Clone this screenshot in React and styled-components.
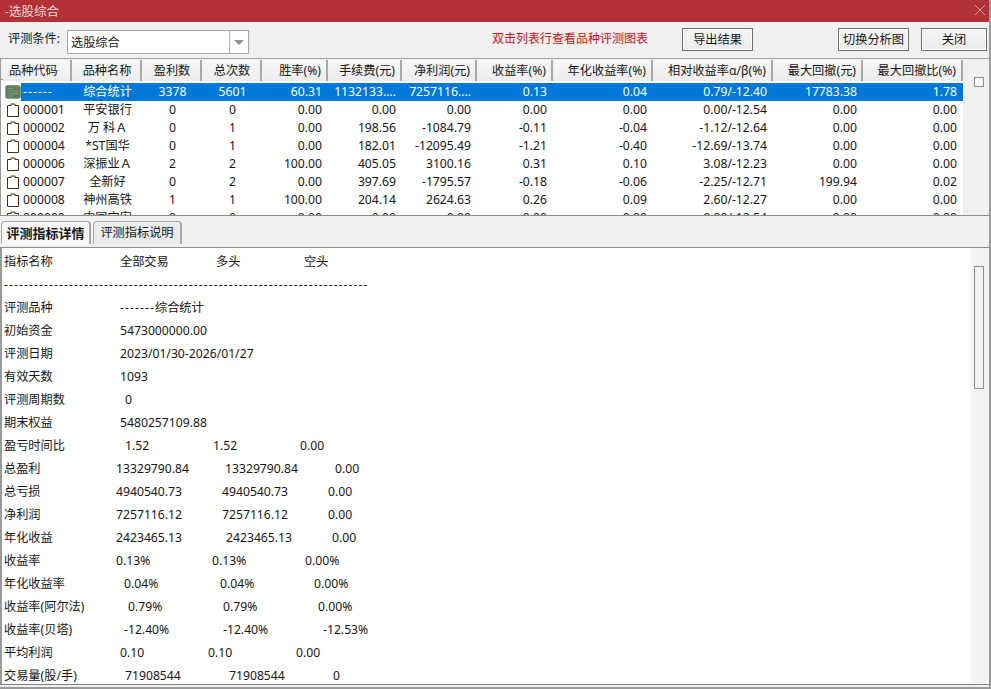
import styled, { createGlobalStyle } from "styled-components";

const GlobalStyle = createGlobalStyle`
  html, body {
    margin: 0;
    padding: 0;
    background: #f0f0f0;
  }
  body {
    font-family: "Noto Sans", "Noto Sans CJK SC", sans-serif;
    font-size: 12.2px;
    color: #161616;
  }
`;

const COLUMNS = "69px 70px 60px 60px 66px 74px 75px 76px 100px 120px 90px 100px";

const headers = [
  "品种代码",
  "品种名称",
  "盈利数",
  "总次数",
  "胜率(%)",
  "手续费(元)",
  "净利润(元)",
  "收益率(%)",
  "年化收益率(%)",
  "相对收益率α/β(%)",
  "最大回撤(元)",
  "最大回撤比(%)",
];

const rows = [
  ["------", "综合统计", "3378", "5601", "60.31", "1132133....", "7257116....", "0.13", "0.04", "0.79/-12.40", "17783.38", "1.78"],
  ["000001", "平安银行", "0", "0", "0.00", "0.00", "0.00", "0.00", "0.00", "0.00/-12.54", "0.00", "0.00"],
  ["000002", "万 科Ａ", "0", "1", "0.00", "198.56", "-1084.79", "-0.11", "-0.04", "-1.12/-12.64", "0.00", "0.00"],
  ["000004", "*ST国华", "0", "1", "0.00", "182.01", "-12095.49", "-1.21", "-0.40", "-12.69/-13.74", "0.00", "0.00"],
  ["000006", "深振业Ａ", "2", "2", "100.00", "405.05", "3100.16", "0.31", "0.10", "3.08/-12.23", "0.00", "0.00"],
  ["000007", "全新好", "0", "2", "0.00", "397.69", "-1795.57", "-0.18", "-0.06", "-2.25/-12.71", "199.94", "0.02"],
  ["000008", "神州高铁", "1", "1", "100.00", "204.14", "2624.63", "0.26", "0.09", "2.60/-12.27", "0.00", "0.00"],
  ["000009", "中国宝安", "0", "0", "0.00", "0.00", "0.00", "0.00", "0.00", "0.00/-12.54", "0.00", "0.00"],
];

// each line: label, then [x, text] pairs, x measured from the window's left edge
const details = [
  ["指标名称", [120, "全部交易"], [216, "多头"], [304, "空头"]],
  ["-".repeat(73)],
  ["评测品种", [120, "-------", "综合统计"]],
  ["初始资金", [120, "5473000000.00"]],
  ["评测日期", [120, "2023/01/30-2026/01/27"]],
  ["有效天数", [120, "1093"]],
  ["评测周期数", [125, "0"]],
  ["期末权益", [120, "5480257109.88"]],
  ["盈亏时间比", [125, "1.52"], [213, "1.52"], [300, "0.00"]],
  ["总盈利", [116, "13329790.84"], [225, "13329790.84"], [335, "0.00"]],
  ["总亏损", [116, "4940540.73"], [222, "4940540.73"], [328, "0.00"]],
  ["净利润", [116, "7257116.12"], [222, "7257116.12"], [328, "0.00"]],
  ["年化收益", [116, "2423465.13"], [226, "2423465.13"], [332, "0.00"]],
  ["收益率", [116, "0.13%"], [212, "0.13%"], [305, "0.00%"]],
  ["年化收益率", [124, "0.04%"], [220, "0.04%"], [314, "0.00%"]],
  ["收益率(阿尔法)", [128, "0.79%"], [223, "0.79%"], [318, "0.00%"]],
  ["收益率(贝塔)", [124, "-12.40%"], [223, "-12.40%"], [323, "-12.53%"]],
  ["平均利润", [120, "0.10"], [208, "0.10"], [296, "0.00"]],
  ["交易量(股/手)", [125, "71908544"], [229, "71908544"], [333, "0"]],
];

function NoteIcon({ selected }) {
  if (selected) {
    return (
      <svg width="16" height="14" viewBox="0 0 16 14">
        <rect x="0.500" y="0.500" width="15" height="13" rx="2" fill="#5f7f5f" stroke="#8f9c90" />
        <path d="M3 3.500h5M3 6h10M3 8.500h10M3 11h6" stroke="#7f9c78" strokeWidth="1" />
      </svg>
    );
  }
  return (
    <svg width="12" height="14" viewBox="0 0 12 14">
      <path d="M0.500 2.500h3.500v-1.500h4v1.500h3.500v11h-11z" fill="#fff" stroke="#4a2a10" strokeWidth="1" />
    </svg>
  );
}

function App() {
  return (
    <>
      <GlobalStyle />
      <Window>
        <TitleBar>
          <span>-选股综合</span>
          <svg width="12" height="12" viewBox="0 0 12 12">
            <path d="M1 1l10 10M11 1L1 11" stroke="#d99ea1" strokeWidth="1" />
          </svg>
        </TitleBar>

        <Toolbar>
          <Label>评测条件:</Label>
          <Combo>
            <ComboText>选股综合</ComboText>
            <ComboArrow>
              <svg width="10" height="5" viewBox="0 0 10 5">
                <path d="M0 0h10L5 5z" fill="#8f8f8f" />
              </svg>
            </ComboArrow>
          </Combo>
          <Hint>双击列表行查看品种评测图表</Hint>
          <Button $w={71} $ml={33}>导出结果</Button>
          <Button $w={71} $ml={85}>切换分析图</Button>
          <Button $w={66} $ml={12}>关闭</Button>
        </Toolbar>

        <ListPanel>
          <ListMain>
            <HeaderRow>
              {headers.map((h, i) => (
                <HeaderCell key={h} $align={i === 0 ? "left" : i < 4 ? "center" : "right"}>
                  {h}
                </HeaderCell>
              ))}
            </HeaderRow>
            <ListBody>
              {rows.map((row, r) => (
                <Row key={row[0]}>
                  <IconSlot $selected={r === 0}>
                    <NoteIcon selected={r === 0} />
                  </IconSlot>
                  <Cells $selected={r === 0}>
                    {row.map((v, i) => (
                      <Cell key={i} $align={i === 0 ? "left" : i < 4 ? "center" : "right"} $dashed={v === "------"}>
                        {v}
                      </Cell>
                    ))}
                  </Cells>
                </Row>
              ))}
            </ListBody>
          </ListMain>
          <SideTrack>
            <SideBox />
          </SideTrack>
        </ListPanel>

        <TabStrip>
          <Tab $active>评测指标详情</Tab>
          <Tab>评测指标说明</Tab>
        </TabStrip>

        <DetailPanel>
          <DetailText>
            {details.map(([label, ...fields]) => (
              <DetailLine key={label}>
                {fields.length === 0 ? (
                  <Dashes>{label}</Dashes>
                ) : (
                  <Field $w={fields[0][0] - 4}>{label}</Field>
                )}
                {fields.map(([x, text, tail], i) => (
                  <Field key={x} $w={fields[i + 1] ? fields[i + 1][0] - x : 160}>
                    {tail ? (
                      <>
                        <Dashes>{text}</Dashes>
                        {tail}
                      </>
                    ) : (
                      text
                    )}
                  </Field>
                ))}
              </DetailLine>
            ))}
          </DetailText>
          <Scrollbar>
            <Thumb />
          </Scrollbar>
        </DetailPanel>
      </Window>
    </>
  );
}

export default App;

const Window = styled.div`
  display: flex;
  flex-direction: column;
  width: 991px;
  height: 689px;
  overflow: hidden;
  box-sizing: border-box;
  background: #f0f0f0;
  border-right: 2px solid #9a9a9a;
  border-bottom: 2px solid #9a9a9a;
`;

const TitleBar = styled.div`
  display: flex;
  align-items: center;
  justify-content: space-between;
  flex: 0 0 22px;
  margin-right: -2px;
  padding: 0 5px 2px 5px;
  box-sizing: border-box;
  background: #b23137;
  color: #f4dcdc;
  font-size: 12.5px;
`;

const Toolbar = styled.div`
  display: flex;
  align-items: flex-start;
  flex: 0 0 36px;
  box-sizing: border-box;
  padding: 6px 0 0 8px;
`;

const Label = styled.span`
  width: 59px;
  line-height: 22px;
`;

const Combo = styled.div`
  display: flex;
  width: 182px;
  height: 24px;
  margin-top: 2px;
  box-sizing: border-box;
  background: #fff;
  border: 1px solid #a6a6a6;
`;

const ComboText = styled.span`
  flex: 1;
  padding-left: 3px;
  line-height: 23px;
`;

const ComboArrow = styled.span`
  display: flex;
  align-items: center;
  justify-content: center;
  width: 18px;
  border-left: 1px solid #b5b5b5;
`;

const Hint = styled.span`
  margin-left: 243px;
  width: 157px;
  line-height: 22px;
  font-size: 12px;
  color: #cc1111;
  white-space: nowrap;
`;

const Button = styled.div`
  width: ${(p) => p.$w}px;
  margin-left: ${(p) => p.$ml}px;
  height: 23px;
  box-sizing: border-box;
  border: 1px solid #6e6e6e;
  background: linear-gradient(#f5f5f5, #ececec);
  box-shadow: inset 0 0 0 1px #fbfbfb;
  text-align: center;
  line-height: 21px;
  white-space: nowrap;
`;

const ListPanel = styled.div`
  display: flex;
  flex: 0 0 158px;
  box-sizing: border-box;
  border-top: 1px solid #a3a3a3;
  border-bottom: 1px solid #8c8c8c;
  border-left: 1px solid #9a9a9a;
  background: #fff;
  overflow: hidden;
`;

const ListMain = styled.div`
  width: 962px;
  box-sizing: border-box;
  overflow: hidden;
`;

const HeaderRow = styled.div`
  display: grid;
  grid-template-columns: ${COLUMNS};
  height: 21px;
  padding: 1px 0 0 2px;
  box-sizing: border-box;
  background: #f0f0f0;
  border-bottom: 1px solid #9f9f9f;
`;

const HeaderCell = styled.div`
  padding-left: ${(p) => (p.$align === "left" ? "6px" : p.$align === "center" ? "2px" : "0")};
  padding-right: ${(p) => (p.$align === "right" ? "5px" : "0")};
  text-align: ${(p) => p.$align};
  line-height: 21px;
  white-space: nowrap;
  border-right: 2px solid #a8a8a8;
  box-sizing: border-box;
  background: linear-gradient(#f7f7f7, #ededed);
`;

const ListBody = styled.div`
  padding-top: 3px;
`;

const Row = styled.div`
  display: flex;
  height: 18px;
`;

const IconSlot = styled.div`
  display: flex;
  align-items: center;
  justify-content: flex-end;
  width: 20px;
  padding-right: ${(p) => (p.$selected ? "0" : "2px")};
  box-sizing: border-box;
`;

const Cells = styled.div`
  display: grid;
  grid-template-columns: 51px 70px 60px 60px 66px 74px 75px 76px 100px 120px 90px 100px;
  flex: 1;
  background: ${(p) => (p.$selected ? "#0078d7" : "transparent")};
  color: ${(p) => (p.$selected ? "#fff" : "inherit")};
`;

const Cell = styled.div`
  text-align: ${(p) => p.$align};
  padding-left: ${(p) => (p.$align === "left" ? "2px" : p.$align === "center" ? "1px" : "0")};
  padding-right: ${(p) => (p.$align === "right" ? "6px" : "0")};
  letter-spacing: ${(p) => (p.$dashed ? "1.07px" : "normal")};
  line-height: 17px;
  white-space: nowrap;
  overflow: hidden;
`;

const SideTrack = styled.div`
  flex: 1;
  background: #f0f0f0;
  padding: 18px 0 0 11px;
`;

const SideBox = styled.div`
  width: 10px;
  height: 10px;
  box-sizing: border-box;
  border: 1px solid #8e8e8e;
  background: #f7f7f7;
`;

const TabStrip = styled.div`
  display: flex;
  align-items: flex-end;
  flex: 0 0 32px;
  box-sizing: border-box;
  padding: 0 0 3px 1px;
  gap: 2px;
  border-bottom: 1px solid #8c8c8c;
`;

const Tab = styled.div`
  width: ${(p) => (p.$active ? "90px" : "89px")};
  height: 23px;
  box-sizing: border-box;
  text-align: center;
  line-height: 22px;
  font-weight: ${(p) => (p.$active ? 700 : 400)};
  font-size: ${(p) => (p.$active ? "13px" : "12.2px")};
  background: ${(p) => (p.$active ? "#f8f8f8" : "#ebebeb")};
  border: 1px solid #a8a8a8;
  border-right-width: 2px;
  border-bottom: 0;
  border-radius: 4px 4px 0 0;
  white-space: nowrap;
`;

const DetailPanel = styled.div`
  display: flex;
  flex: 1;
  min-height: 0;
  background: #fff;
  border-left: 2px solid #9a9a9a;
  border-bottom: 1px solid #808080;
  margin-bottom: 2px;
`;

const DetailText = styled.div`
  flex: 1;
  padding: 2px 0 0 2px;
  overflow: hidden;
`;

const DetailLine = styled.div`
  display: flex;
  height: 23px;
  line-height: 23px;
  white-space: nowrap;
`;

const Field = styled.span`
  flex: 0 0 auto;
  width: ${(p) => p.$w}px;
`;

const Dashes = styled.span`
  letter-spacing: 1.07px;
`;

const Scrollbar = styled.div`
  width: 18px;
  box-sizing: border-box;
  padding: 18px 4px 0 3px;
  background: #f3f3f1;
`;

const Thumb = styled.div`
  width: 10px;
  height: 123px;
  box-sizing: border-box;
  border: 1px solid #8d8d8d;
  background: #f3f3f1;
`;
